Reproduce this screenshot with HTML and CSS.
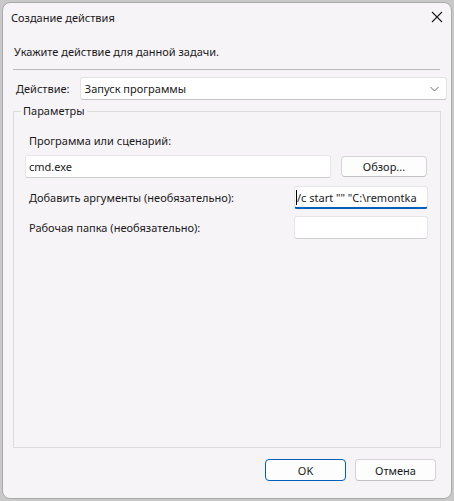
FILE: index.html
```html
<!DOCTYPE html>
<html lang="ru">
<head>
<meta charset="utf-8">
<title>Создание действия</title>
<link rel="stylesheet" href="styles.css">
</head>
<body>
<div class="window">
  <div class="titlebar">
    <span class="title">Создание действия</span>
    <span class="close">
      <svg width="12" height="12" viewBox="0 0 12 12"><path d="M1 1 L11 11 M11 1 L1 11" stroke="#1b1b1b" stroke-width="1.1" fill="none"/></svg>
    </span>
  </div>
  <div class="content">
    <div class="intro">Укажите действие для данной задачи.</div>
    <div class="sep"></div>
    <div class="action-row">
      <span class="action-label">Действие:</span>
      <div class="select">
        <span>Запуск программы</span>
        <svg class="chev" width="9" height="6" viewBox="0 0 9 6"><path d="M0.5 1 L4.5 5 L8.5 1" stroke="#6a6a6a" stroke-width="1" fill="none"/></svg>
      </div>
    </div>
    <fieldset class="group">
      <legend>Параметры</legend>
      <div class="lbl first">Программа или сценарий:</div>
      <div class="prog-row">
        <div class="input wide">cmd.exe</div>
        <div class="btn browse">Обзор...</div>
      </div>
      <div class="opt-row">
        <span class="lbl">Добавить аргументы (необязательно):</span>
        <div class="input small focused"><span class="caret"></span>/c start "" "C:\remontka</div>
      </div>
      <div class="opt-row">
        <span class="lbl">Рабочая папка (необязательно):</span>
        <div class="input small"></div>
      </div>
    </fieldset>
    <div class="footer">
      <div class="btn ok">OK</div>
      <div class="btn">Отмена</div>
    </div>
  </div>
</div>
</body>
</html>
```
FILE: styles.css
```css
html, body {
  margin: 0;
  padding: 0;
}
body {
  width: 454px;
  height: 501px;
  background: #c9c9c9;
  font-family: "Noto Sans", "Open Sans", sans-serif;
  font-size: 11px;
  color: #1a1a1a;
  overflow: hidden;
}
.window {
  box-sizing: border-box;
  margin: 2px 0 0 2px;
  width: 450px;
  height: 497px;
  background: #f7f4f8;
  border: 1px solid #a9a9a9;
  border-radius: 8px;
  display: flex;
  flex-direction: column;
}
.titlebar {
  height: 30px;
  display: flex;
  align-items: center;
  justify-content: space-between;
  padding: 0 8px 0 8px;
}
.title {
  line-height: 16px;
  margin-top: -1px;
}
.close {
  display: flex;
  width: 12px;
  height: 12px;
  margin-top: -3px;
}
.content {
  flex: 1;
  display: flex;
  flex-direction: column;
  padding: 0 4px 0 10px;
}
.intro {
  margin-top: 11px;
  line-height: 16px;
  padding-left: 1px;
}
.sep {
  margin-top: 9px;
  width: 427px;
  height: 1px;
  background: #b8b8b8;
}
.action-row {
  margin-top: 7px;
  display: flex;
  align-items: center;
}
.action-label {
  width: 67px;
  padding-left: 3px;
  box-sizing: border-box;
  line-height: 16px;
}
.select {
  box-sizing: border-box;
  width: 368px;
  height: 23px;
  background: #ffffff;
  border: 1px solid #e3e3e3;
  border-bottom-color: #c5c5c5;
  border-radius: 3px;
  display: flex;
  align-items: center;
  justify-content: space-between;
  padding: 0 7px 0 4px;
}
.chev {
  display: block;
}
.group {
  margin: 3px 0 0 0;
  width: 428px;
  box-sizing: border-box;
  border: 1px solid #dcdcdc;
  padding: 0 12px 0 11px;
  flex: 1;
  min-height: 0;
  display: flex;
  flex-direction: column;
  min-inline-size: 0;
}
.group legend {
  padding: 0 2px;
  margin-left: -4px;
  line-height: 16px;
}
.lbl {
  line-height: 16px;
  padding-left: 4px;
}
.lbl.first {
  margin-top: 14px;
}
.prog-row {
  margin-top: 6px;
  display: flex;
  align-items: center;
  gap: 10px;
}
.input {
  box-sizing: border-box;
  height: 23px;
  background: #ffffff;
  border: 1px solid #e6e6e6;
  border-bottom-color: #cfcfcf;
  border-radius: 3px;
  display: flex;
  align-items: center;
  padding: 0 3px;
  white-space: nowrap;
  overflow: hidden;
}
.input.wide {
  width: 306px;
}
.input.small {
  width: 134px;
}
.input.focused {
  border-bottom: 2px solid #005fb8;
  padding-left: 1px;
  padding-top: 1px;
}
.caret {
  display: inline-block;
  width: 1px;
  height: 15px;
  background: #000;
}
.btn {
  box-sizing: border-box;
  width: 81px;
  height: 22px;
  background: #fdfdfd;
  border: 1px solid #d4d4d4;
  border-bottom-color: #c2c2c2;
  border-radius: 4px;
  display: flex;
  align-items: center;
  justify-content: center;
}
.btn.browse {
  width: 86px;
  height: 21px;
}
.opt-row {
  margin-top: 8px;
  display: flex;
  align-items: center;
  justify-content: space-between;
}
.opt-row + .opt-row {
  margin-top: 7px;
}
.footer {
  display: flex;
  justify-content: flex-end;
  gap: 9px;
  padding: 11px 11px 17px 0;
}
.btn.ok {
  border: 1px solid #005fb8;
}
```
